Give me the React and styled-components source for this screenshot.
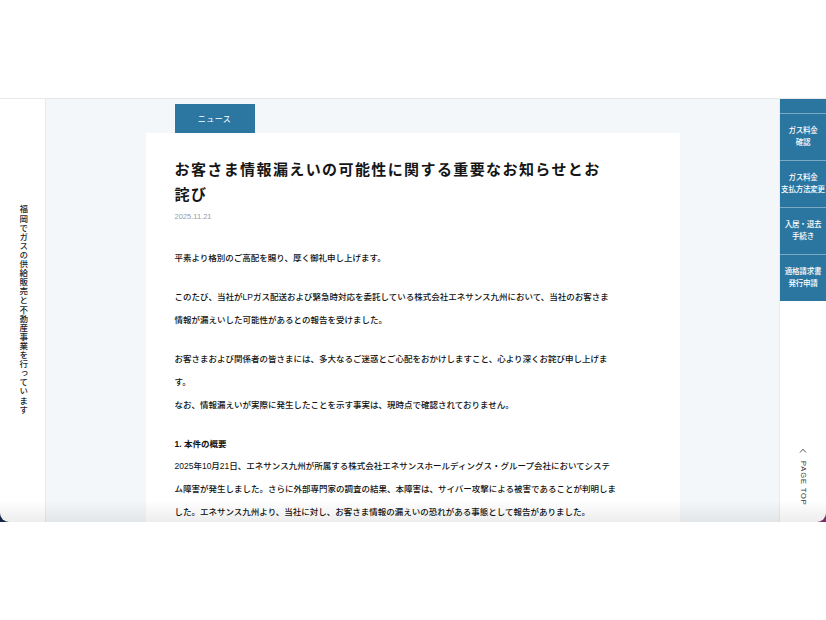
import React from 'react';
import styled, { createGlobalStyle } from 'styled-components';

const GlobalStyle = createGlobalStyle`
  html, body {
    margin: 0;
    padding: 0;
    background: #ffffff;
  }
  body {
    font-family: "Liberation Sans", "Noto Sans CJK JP", sans-serif;
    color: #1c1c1c;
  }
`;

const Screen = styled.div`
  width: 826px;
  height: 620px;
  display: flex;
  flex-direction: column;
  background: #ffffff;
`;

const TopSpace = styled.div`
  height: 98px;
  flex-shrink: 0;
  border-bottom: 1px solid #e6e8ea;
`;

const Desktop = styled.div`
  height: 423px;
  flex-shrink: 0;
  background: linear-gradient(90deg, #14284a 0%, #3a3f6e 50%, #7b2e6a 100%);
`;

const Frame = styled.div`
  position: relative;
  height: 100%;
  display: flex;
  overflow: hidden;
  background: #ffffff;
  border-radius: 0 0 9px 9px;
`;

const BottomFade = styled.div`
  position: absolute;
  left: 0;
  right: 0;
  bottom: 0;
  height: 22px;
  pointer-events: none;
  background: linear-gradient(to bottom, rgba(0, 0, 0, 0), rgba(0, 0, 0, 0.07));
`;

const LeftAside = styled.aside`
  width: 46px;
  flex-shrink: 0;
  border-right: 1px solid #e8ecee;
  display: flex;
  justify-content: center;
  padding-top: 106px;
  box-sizing: border-box;
`;

const Catch = styled.p`
  margin: 0;
  writing-mode: vertical-rl;
  font-size: 8.5px;
  font-weight: 500;
  letter-spacing: 0.6px;
  line-height: 1;
  color: #1e1e1e;
`;

const Main = styled.main`
  flex: 1;
  background: #f4f7f9;
  padding-top: 5px;
  box-sizing: border-box;
`;

const Article = styled.article`
  width: 534px;
  margin: 0 auto;
`;

const Tab = styled.div`
  width: 80px;
  height: 29px;
  margin-left: 29px;
  background: #2b77a2;
  color: #ffffff;
  font-size: 8px;
  letter-spacing: 0.5px;
  display: flex;
  align-items: center;
  justify-content: center;
`;

const Card = styled.div`
  background: #ffffff;
  padding: 24px 29px 40px;
`;

const Title = styled.h1`
  margin: 0;
  font-size: 15px;
  font-weight: 700;
  line-height: 25px;
  letter-spacing: 1.4px;
  color: #161616;
`;

const DateText = styled.div`
  margin-top: 4px;
  font-size: 7.5px;
  line-height: 12px;
  color: #9a9a9a;
`;

const Body = styled.div`
  margin-top: 24px;
  font-size: 8.5px;
  font-weight: 500;
  line-height: 23px;
  color: #111111;
`;

const Para = styled.p`
  margin: 0 0 16px;
  white-space: nowrap;
`;

const Heading = styled.h2`
  margin: 0;
  font-size: 8.5px;
  font-weight: 700;
  line-height: 22px;
`;

const RightAside = styled.aside`
  width: 46px;
  flex-shrink: 0;
  border-left: 1px solid #e8ecee;
  display: flex;
  flex-direction: column;
  align-items: stretch;
`;

const Nav = styled.nav`
  margin-top: -32px;
  display: flex;
  flex-direction: column;
  gap: 1px;
  background: #7aaac6;
`;

const NavButton = styled.a`
  height: 46px;
  background: #2b76a1;
  color: #ffffff;
  font-size: 7.5px;
  font-weight: 500;
  line-height: 12px;
  text-align: center;
  display: flex;
  align-items: center;
  justify-content: center;
  white-space: nowrap;
  letter-spacing: -0.2px;
`;

const PageTop = styled.div`
  margin-top: auto;
  padding-bottom: 16px;
  display: flex;
  flex-direction: column;
  align-items: center;
  gap: 8px;
  color: #333333;
`;

const PageTopLabel = styled.span`
  writing-mode: vertical-rl;
  font-size: 7.5px;
  letter-spacing: 0.9px;
  line-height: 1;
`;

const Chevron = () => (
  <svg width="8" height="5" viewBox="0 0 8 5" fill="none">
    <path d="M1 4.5 L4 1.2 L7 4.5" stroke="#444" strokeWidth="0.9" />
  </svg>
);

const navItems = [
  ['公式', 'アプリ登録'],
  ['ガス料金', '確認'],
  ['ガス料金', '支払方法変更'],
  ['入居・退去', '手続き'],
  ['適格請求書', '発行申請'],
];

export default function App() {
  return (
    <Screen>
      <GlobalStyle />
      <TopSpace />
      <Desktop>
        <Frame>
          <LeftAside>
            <Catch>福岡でガスの供給販売と不動産事業を行っています</Catch>
          </LeftAside>
          <Main>
            <Article>
              <Tab>ニュース</Tab>
              <Card>
                <Title>
                  お客さま情報漏えいの可能性に関する重要なお知らせとお
                  <br />
                  詫び
                </Title>
                <DateText>2025.11.21</DateText>
                <Body>
                  <Para>平素より格別のご高配を賜り、厚く御礼申し上げます。</Para>
                  <Para>
                    このたび、当社がLPガス配送および緊急時対応を委託している株式会社エネサンス九州において、当社のお客さま
                    <br />
                    情報が漏えいした可能性があるとの報告を受けました。
                  </Para>
                  <Para>
                    お客さまおよび関係者の皆さまには、多大なるご迷惑とご心配をおかけしますこと、心より深くお詫び申し上げま
                    <br />
                    す。
                    <br />
                    なお、情報漏えいが実際に発生したことを示す事実は、現時点で確認されておりません。
                  </Para>
                  <Heading>1. 本件の概要</Heading>
                  <Para>
                    2025年10月21日、エネサンス九州が所属する株式会社エネサンスホールディングス・グループ会社においてシステ
                    <br />
                    ム障害が発生しました。さらに外部専門家の調査の結果、本障害は、サイバー攻撃による被害であることが判明しま
                    <br />
                    した。エネサンス九州より、当社に対し、お客さま情報の漏えいの恐れがある事態として報告がありました。
                  </Para>
                </Body>
              </Card>
            </Article>
          </Main>
          <RightAside>
            <Nav>
              {navItems.map(([a, b]) => (
                <NavButton key={a + b}>
                  {a}
                  <br />
                  {b}
                </NavButton>
              ))}
            </Nav>
            <PageTop>
              <Chevron />
              <PageTopLabel>PAGE TOP</PageTopLabel>
            </PageTop>
          </RightAside>
          <BottomFade />
        </Frame>
      </Desktop>
    </Screen>
  );
}
